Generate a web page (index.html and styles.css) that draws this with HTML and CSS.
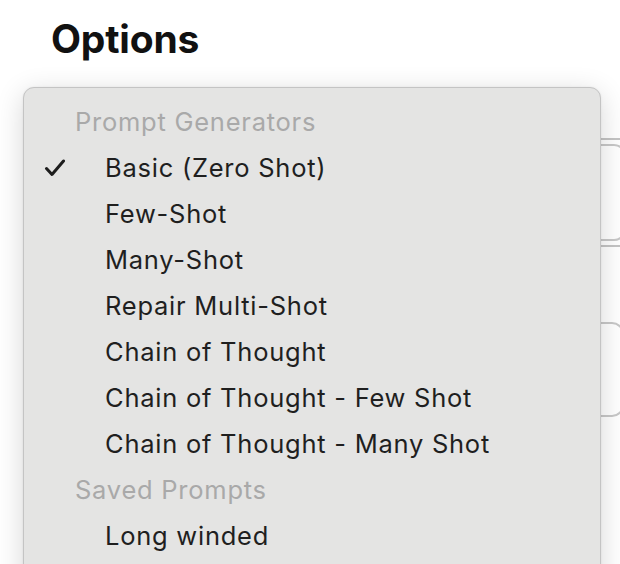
FILE: index.html
```html
<!DOCTYPE html>
<html>
<head>
<meta charset="utf-8">
<link rel="stylesheet" href="styles.css">
</head>
<body>
<div class="page">
  <h1 class="title">Options</h1>
  <div class="fields">
    <div class="field-focus"><div class="field-inner"></div></div>
    <div class="field-plain"></div>
  </div>
</div>
<div class="menu">
  <div class="menu-header">Prompt Generators</div>
  <div class="menu-item checked"><span class="check"><svg width="22" height="18" viewBox="0 0 22 18"><path d="M2.5 9.5 L8 15.5 L19.5 2" fill="none" stroke="#1d1d1d" stroke-width="3" stroke-linecap="round" stroke-linejoin="round"/></svg></span>Basic (Zero Shot)</div>
  <div class="menu-item">Few-Shot</div>
  <div class="menu-item">Many-Shot</div>
  <div class="menu-item">Repair Multi-Shot</div>
  <div class="menu-item">Chain of Thought</div>
  <div class="menu-item">Chain of Thought - Few Shot</div>
  <div class="menu-item">Chain of Thought - Many Shot</div>
  <div class="menu-header">Saved Prompts</div>
  <div class="menu-item">Long winded</div>
</div>
</body>
</html>
```
FILE: styles.css
```css
html, body {
  margin: 0;
  padding: 0;
  background: #ffffff;
  width: 620px;
  height: 564px;
  overflow: hidden;
  font-family: Inter, "Liberation Sans", sans-serif;
}
.page {
  padding: 13px 0 0 51px;
}
.title {
  margin: 0;
  font-size: 39px;
  font-weight: 700;
  color: #111;
  line-height: 51px;
  letter-spacing: -0.2px;
}
.fields {
  margin-top: 74px;
  display: flex;
  flex-direction: column;
  gap: 75px;
}
.field-focus {
  width: 620px;
  height: 109px;
  box-sizing: border-box;
  border: 2px solid #c4c4c4;
  border-radius: 16px;
  padding: 4px 0 4px 4px;
}
.field-inner {
  width: 569px;
  height: 100%;
  box-sizing: border-box;
  border: 2px solid #c8c8c8;
  border-radius: 12px;
}
.field-plain {
  width: 573px;
  height: 95px;
  box-sizing: border-box;
  border: 2px solid #c8c8c8;
  border-radius: 12px;
}
.menu {
  position: absolute;
  left: 23px;
  top: 87px;
  width: 578px;
  height: 520px;
  box-sizing: border-box;
  background: #e4e4e3;
  border: 1px solid #c4c4c4;
  border-radius: 11px;
  box-shadow: 0 6px 28px rgba(0,0,0,0.16), 0 0 2px rgba(0,0,0,0.08);
  padding-top: 11px;
  font-size: 25.5px;
  letter-spacing: 0.75px;
}
.menu-header {
  height: 46px;
  line-height: 46px;
  padding-left: 51px;
  color: #a9a9a9;
}
.menu-item {
  height: 46px;
  line-height: 46px;
  padding-left: 81px;
  color: #1f1f1f;
  position: relative;
}
.check {
  position: absolute;
  left: 20px;
  top: 14px;
  width: 22px;
  height: 18px;
  display: block;
}
.check svg { display: block; }
```
